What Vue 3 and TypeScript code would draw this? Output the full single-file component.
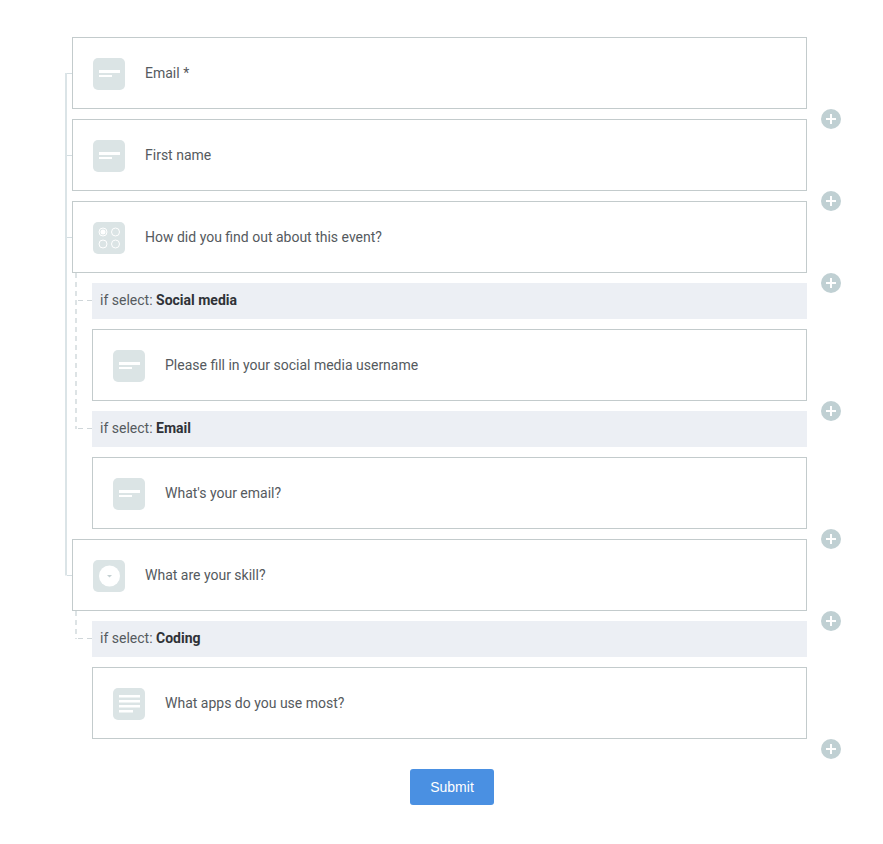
<script setup lang="ts">
type Item =
  | { kind: 'card'; label: string; icon: 'text' | 'radio' | 'select' | 'lines'; nested?: boolean }
  | { kind: 'cond'; value: string }

const items: Item[] = [
  { kind: 'card', label: 'Email *', icon: 'text' },
  { kind: 'card', label: 'First name', icon: 'text' },
  { kind: 'card', label: 'How did you find out about this event?', icon: 'radio' },
  { kind: 'cond', value: 'Social media' },
  { kind: 'card', label: 'Please fill in your social media username', icon: 'text', nested: true },
  { kind: 'cond', value: 'Email' },
  { kind: 'card', label: "What's your email?", icon: 'text', nested: true },
  { kind: 'card', label: 'What are your skill?', icon: 'select' },
  { kind: 'cond', value: 'Coding' },
  { kind: 'card', label: 'What apps do you use most?', icon: 'lines', nested: true }
]
</script>

<template>
  <main class="page">
    <form class="builder" @submit.prevent>
      <svg class="tree" width="40" height="620" viewBox="0 0 40 620" aria-hidden="true">
        <path class="solid" d="M1 36V538.5" />
        <path class="tick" d="M2 36.5H7M2 118.5H7M2 200.5H7M2 538.5H7" />
        <path class="dashed" d="M11 236V392M11 574V602" />
        <path class="dashed thin" d="M13 263.5H27M13 391.5H27M13 601.5H27" />
      </svg>

      <template v-for="(item, index) in items" :key="index">
        <div v-if="item.kind === 'cond'" class="cond">
          if select: <strong>{{ item.value }}</strong>
        </div>
        <div v-else class="card" :class="{ nested: item.nested }">
          <span class="icon">
            <svg width="32" height="32" viewBox="0 0 32 32">
              <rect width="32" height="32" rx="5" fill="#dbe4e5" />
              <template v-if="item.icon === 'text'">
                <rect x="6" y="12" width="21" height="3" fill="#fff" />
                <rect x="6" y="17" width="13" height="2" fill="#fff" />
              </template>
              <template v-else-if="item.icon === 'radio'">
                <circle cx="10" cy="10" r="4" fill="none" stroke="#fff" stroke-width="1" />
                <circle cx="10" cy="10" r="2.5" fill="#fff" />
                <circle cx="22.5" cy="10" r="4" fill="none" stroke="#fff" stroke-width="1" />
                <circle cx="10" cy="22" r="4" fill="none" stroke="#fff" stroke-width="1" />
                <circle cx="22.5" cy="22" r="4" fill="none" stroke="#fff" stroke-width="1" />
              </template>
              <template v-else-if="item.icon === 'select'">
                <circle cx="16.5" cy="16" r="10.5" fill="#fff" />
                <path d="M14 15h5l-2.5 2.5z" fill="#c4d0d2" />
              </template>
              <template v-else>
                <rect x="6" y="7" width="21" height="2.5" fill="#fff" />
                <rect x="6" y="12" width="21" height="2.5" fill="#fff" />
                <rect x="6" y="17" width="21" height="2.5" fill="#fff" />
                <rect x="6" y="22" width="14" height="2.5" fill="#fff" />
              </template>
            </svg>
          </span>
          <span class="label">{{ item.label }}</span>
          <button class="add" type="button" aria-label="Add field">
            <svg width="20" height="20" viewBox="0 0 20 20">
              <circle cx="10" cy="10" r="10" fill="#c0d0d3" />
              <path d="M10 5v10M5 10h10" stroke="#fff" stroke-width="2" />
            </svg>
          </button>
        </div>
      </template>

      <div class="actions">
        <button class="submit" type="submit">Submit</button>
      </div>
    </form>
  </main>
</template>

<style>
html, body { background: #fff; }
</style>

<style scoped>
.page {
  padding: 37px 0 39px 72px;
  width: 735px;
  font-family: Roboto, "Liberation Sans", sans-serif;
  font-size: 14px;
  color: #555a5e;
}
.builder {
  position: relative;
  display: flex;
  flex-direction: column;
  gap: 10px;
}
.tree {
  position: absolute;
  left: -7px;
  top: 0;
  overflow: visible;
  pointer-events: none;
}
.solid {
  fill: none;
  stroke: #dbe4e7;
  stroke-width: 2;
}
.tick {
  fill: none;
  stroke: #d4dee2;
  stroke-width: 1;
}
.dashed {
  fill: none;
  stroke: #dde3e5;
  stroke-width: 2;
  stroke-dasharray: 5 4;
}
.dashed.thin {
  stroke-width: 1;
  stroke: #cfd6d9;
}
.card {
  position: relative;
  box-sizing: border-box;
  height: 72px;
  display: flex;
  align-items: center;
  gap: 20px;
  padding-left: 20px;
  border: 1px solid #c3cbcc;
  background: #fff;
}
.card.nested {
  margin-left: 20px;
}
.icon {
  display: flex;
  width: 32px;
  height: 32px;
  margin-top: 2px;
}
.add {
  position: absolute;
  right: -35px;
  bottom: -21px;
  width: 20px;
  height: 20px;
  padding: 0;
  border: 0;
  background: none;
  display: flex;
}
.cond {
  box-sizing: border-box;
  height: 36px;
  margin-left: 20px;
  padding: 0 0 2px 8px;
  display: flex;
  align-items: center;
  gap: 3.5px;
  background: #eceff4;
  color: #555a5e;
}
.cond strong {
  font-weight: 700;
  color: #2f3237;
}
.actions {
  display: flex;
  justify-content: center;
  margin-right: -25px;
  padding-top: 20px;
}
.submit {
  width: 84px;
  height: 36px;
  border: 0;
  border-radius: 3px;
  background: #4a90e2;
  color: #fff;
  font-family: "Liberation Sans", Arial, sans-serif;
  font-size: 14px;
}
</style>
